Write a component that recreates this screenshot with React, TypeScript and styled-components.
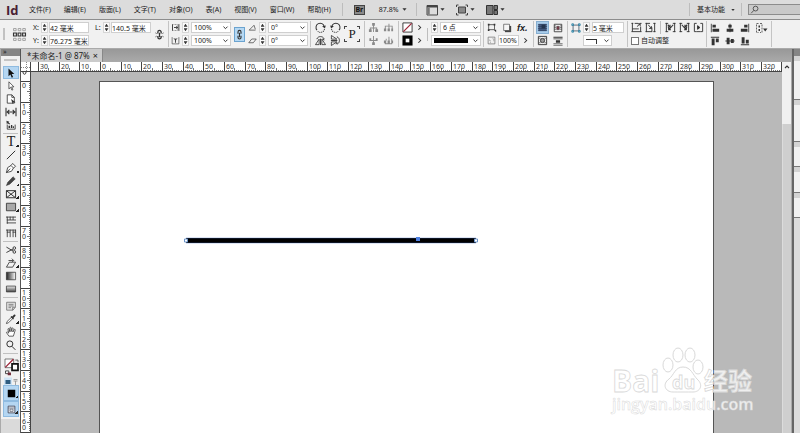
import React, { useLayoutEffect, useRef, useState } from "react";
import styled, { createGlobalStyle } from "styled-components";

const GlobalStyle = createGlobalStyle`
  * { box-sizing: border-box; }
  html, body, #root { height: 100%; }
  body {
    margin: 0;
    overflow: hidden;
    color: #222;
    font: 7px/10px "Noto Sans", "Noto Sans CJK SC", sans-serif;
  }
  button, input, select { font: inherit; color: inherit; margin: 0; }
`;

/* ---------- icons ---------- */

const k = "#333";
const g = "#8a8a8a";

const ICONS: Record<string, React.ReactNode> = {
  reference: (
    <g fill="none" stroke={k} strokeWidth=".8">
      <path stroke="#999" d="M.5 .5h2.400v2H.5zM4.800 .5h2.400v2H4.800zM9 .5h2.400v2H9zM.5 9.500h2.400v2H.5zM4.800 9.500h2.400v2H4.800zM9 9.500h2.400v2H9z" />
      <path strokeWidth="1.100" d="M.5 4.600h2.600v2.800H.5zM4.700 4.600h2.600v2.800H4.700zM8.900 4.600h2.600v2.800H8.900z" />
    </g>
  ),
  chain: (
    <g fill="none" stroke={k}>
      <path strokeWidth="1.400" d="M4.200 5V3.400a1.800 1.800 0 0 1 3.600 0V5M4.200 7.500v1.400a1.800 1.800 0 0 0 3.600 0V7.500M6 4v5" />
      <path strokeWidth=".8" d="M1.500 4.200l1.400.8M1.500 8.600l1.400-.8M10.500 4.200l-1.400.8M10.500 8.600l-1.400-.8" />
    </g>
  ),
  link: <path fill="none" stroke={k} strokeWidth="1.500" d="M4 5V2.500a2 2 0 0 1 4 0V5M4 7.500V10a2 2 0 0 0 4 0V7.500M6 3.500v6" />,
  scaleX: (
    <g fill="none" stroke={k} strokeWidth=".8">
      <path d="M1.500 2h7.500v8H1.500" strokeDasharray="1 1" />
      <path d="M2 2v8M10.500 1.500v9M4 6h5M7 4.300L9 6 7 7.700" strokeWidth="1.200" />
    </g>
  ),
  scaleY: (
    <g fill="none" stroke={k} strokeWidth=".8">
      <path d="M1.500 1.500v9h9v-9" />
      <path d="M6 9V3.500M4 3l2 2.500L8 3" strokeWidth="1.200" />
    </g>
  ),
  angle: <path fill="none" stroke={k} strokeWidth=".9" d="M10 9.500H1.500L8 3l1.800 5.400" />,
  shear: <path fill="none" stroke={k} strokeWidth=".9" d="M1 9L5 4h6L7 9z" />,
  rotateCw: (
    <g fill="none" stroke={k} strokeWidth="1.100">
      <path d="M2.200 8.800A4.500 4.500 0 1 1 10 5" />
      <path d="M3 10.200a4.500 4.500 0 0 0 7.400-2.500" strokeDasharray="1 1" />
      <path fill={k} stroke="none" d="M11.800 3.800L7.800 4.600l3 2.600z" />
    </g>
  ),
  rotateCcw: (
    <g fill="none" stroke={k} strokeWidth="1.100">
      <path d="M9.800 8.800A4.500 4.500 0 1 0 2 5" />
      <path d="M9 10.200a4.500 4.500 0 0 1-7.400-2.500" strokeDasharray="1 1" />
      <path fill={k} stroke="none" d="M.2 3.800l4 .8-3 2.600z" />
    </g>
  ),
  flipH: (
    <g fill="none" stroke={k}>
      <path d="M.5 10.500h4V4.500zM7.500 10.500h4l-4-6z" strokeWidth=".9" />
      <path d="M2 4.500C3 .8 9 .8 10 4.500M10.200 5.500l-2-1.200M6 4v7" strokeWidth="1" />
    </g>
  ),
  flipV: (
    <g fill="none" stroke={k}>
      <path d="M1.500 .5v4h6zM1.500 11.500v-4h6z" strokeWidth=".9" />
      <path d="M7.500 2C11.200 3 11.200 9 7.500 10M6.500 10l1.200-2M1 6h7" strokeWidth="1" />
    </g>
  ),
  parent: <path fill={g} d="M4.500 1h3v3h-1v2H10v2h1v3H8V8h1V7H6.500v4h-1V7H3v1h1v3H1V8h1V6h3.500V4h-1z" />,
  child: <path fill={g} d="M4.500 11h3V8h-1V6.500h4v-3h-2V5.500h-2V1h-1v4.500h-2v-2h-2v3h4V8h-1z" />,
  prevObj: <path fill={g} d="M1 7h2.500v3H1zM5 7h2.500v3H5zM9 7h2v3H9zM2 4h8v1H2zM2 4h1v3H2zM6 2h1v5H6zM9.500 4h1v3h-1z" />,
  nextObj: <path fill={g} d="M1 6h2.500v3H1zM5 6h2.500v3H5zM9 6h2v3H9zM2 9h8v1H2zM3 4h1v2H3zM6 2h1v4H6zM9 4h1v2H9z" />,
  noFill: (
    <g>
      <path fill="#fff" stroke={k} d="M1 1h10v10H1z" />
      <path stroke="#9d2437" strokeWidth="1.300" d="M1.500 10.500l9-9" />
    </g>
  ),
  strokeSwatch: (
    <g>
      <path fill="#000" d="M.5.5h11v11H.5z" />
      <path fill="#fff" d="M4 4h4v4H4z" />
    </g>
  ),
  arrow: <path fill="none" stroke={k} strokeWidth="1.400" d="M4.500 3l3 3-3 3" />,
  chevron: <path fill="none" stroke={k} strokeWidth="1.700" d="M2.500 4.500L6 8l3.500-3.500" />,
  chevronUp: <path fill="none" stroke={k} strokeWidth="1.700" d="M3 7.500l3-3 3 3" />,
  caret: <path fill={k} d="M1 3h10L6 9z" />,
  effect: (
    <g fill="none" stroke={k} strokeWidth=".9">
      <path d="M2 2h7v6H2z" />
      <path fill={k} stroke="none" d="M1 1h2v2H1zM8 1h2v2H8zM1 7.500h2v2H1zM8 8h3v3z" />
    </g>
  ),
  shadow: (
    <g>
      <path fill="#444" d="M3.500 3.500H11V11H3.500z" />
      <path fill="#f6f6f6" stroke={k} strokeWidth=".7" d="M2 1.500h7v7.500H2z" />
    </g>
  ),
  opacity: (
    <g fill="none" stroke="#666" strokeWidth=".9">
      <path d="M1.500 1.500h9v9h-9z" />
      <path d="M3 5.500h1.500v3H3M7.500 3.500h1.500v3H7.500" strokeDasharray="1 1" />
    </g>
  ),
  wrapNone: (
    <g>
      <path fill="#4a6288" d="M1.500 2h9v8h-9z" />
      <path stroke="#2a3b58" strokeWidth=".8" d="M1 3h10M1 5h10M1 7h10M1 9h10" />
      <path fill="#24364f" d="M5 3h4v4H5z" />
    </g>
  ),
  wrapBox: (
    <g fill="none" stroke={k}>
      <path strokeWidth="1" d="M1.500 1.500h9v9h-9z" />
      <path strokeWidth=".8" d="M1.500 3.500h2M1.500 5.500h2M1.500 7.500h2M8.500 3.500h2M8.500 5.500h2M8.500 7.500h2" />
      <path fill="#7d3b4a" strokeWidth=".6" d="M4.500 4h3v4h-3z" />
    </g>
  ),
  wrapShape: (
    <g fill="none" stroke={k}>
      <path d="M1.500 1.500h9v9h-9z" />
      <circle cx="6" cy="6" r="2.300" fill="#999" />
      <path strokeWidth=".7" d="M2 3.500h2M8 3.500h2M2 8.500h2M8 8.500h2" />
    </g>
  ),
  wrapJump: <path fill={k} d="M.5 .8h11v1.300H.5zM.5 3h11v1H.5zM3.500 5h5v3h-5zM.5 9h11v1H.5zM.5 10.700h11v.8H.5z" />,
  corner: (
    <g fill="none" stroke="#2f7fa0">
      <path d="M2.500 2.500h7v7h-7z" stroke="#456" />
      <path fill="#8cc9df" d="M1 1h2v2H1zM9 1h2v2H9zM1 9h2v2H1zM9 9h2v2H9z" />
    </g>
  ),
  fitA: (
    <g fill="none" stroke={k} strokeWidth="1">
      <path d="M.5 1.500h2M9.500 1.500h2M1.500 1v9.500M10.500 5v5.500M.5 10.500h11M1.500 7.500h7" />
      <path d="M4 1.500h4M6.500 5L10 2M7.500 2H10v2.500" />
    </g>
  ),
  fitB: (
    <g fill="none" stroke={k} strokeWidth="1">
      <path d="M.5 1.500h5M1.500 1v10M.5 10.500h7M7.500 6v5M10.500 1v10M9 1.500h2.500M9 10.500h2.500" />
      <path d="M3.500 3l3.500 4M7 4.500V7H4.500" />
    </g>
  ),
  fitC: (
    <g fill="none" stroke={k} strokeWidth="1">
      <path d="M1.500 1v10M10.500 1v10M.5 1.500h3M8.500 1.500h3M.5 10.500h3M8.500 10.500h3" />
      <path d="M3 3l2.500 2.500M5.500 3v2.500H3M9 3L4 8.500M4 6v2.500h2.500" strokeWidth="1.200" />
    </g>
  ),
  fitD: (
    <g fill="none" stroke={k} strokeWidth="1">
      <path d="M1.500 1v10M10.500 1v10M.5 1.500h3M8.500 1.500h3M.5 10.500h3M8.500 10.500h3" />
      <path d="M9 3L6.500 5.500M6.500 3v2.500H9M3 3l5 5.500M8 6v2.500H5.500" strokeWidth="1.200" />
    </g>
  ),
  fitE: (
    <g fill="none" stroke={k} strokeWidth="1">
      <path d="M4 1.500H1.500v9H4M8 1.500h2.500v9H8M4 10.500h4" />
      <path fill={k} d="M5 4l2.500 2L5 8z" />
    </g>
  ),
  alignL: <path fill={k} d="M1 1h1v10H1zM3 2h4v3.500H3zM3 7h8v3.500H3z" />,
  alignC: <path fill={k} d="M5.500 1h1v10h-1zM4 2h4v3.500H4zM2 7h8v3.500H2z" />,
  alignR: <path fill={k} d="M10 1h1v10h-1zM5 2h4v3.500H5zM1 7h8v3.500H1z" />,
  alignT: <path fill={k} d="M1 1h10v1H1zM2 3h3.500v8H2zM7 3h3.500v4.500H7z" />,
  alignM: <path fill={k} d="M.5 5.500h11v1H.5zM2 2h3.500v8H2zM7 3.500h3.500v5H7z" />,
  alignB: <path fill={k} d="M1 10h10v1H1zM2 1.500h3.500V9H2zM7 4.500h3.500V9H7z" />,
  alignTo: (
    <g fill="none" stroke="#555" strokeWidth=".9">
      <path d="M3.500 1.500h-2v9h2M5 1.500h2v9H5" strokeDasharray="2 1" />
      <path fill={k} stroke="none" d="M8 6.500h4.500L10.200 9.500zM3.500 3.500h1.500v2H3.500zM3.500 7h1.500v2H3.500z" />
    </g>
  ),
  search: <path fill="none" stroke={k} strokeWidth="1" d="M1.500 11l3.600-3.800M4.200 4.800a3.200 3.200 0 1 1 6.400 0 3.200 3.200 0 0 1-6.400 0z" />,
  viewOptions: (
    <g fill="none" stroke="#444">
      <path d="M1 1.500h10.500v9.500H1z" />
      <path strokeWidth="2" d="M1 2.500h10.500" />
      <path strokeWidth="2.500" stroke="#777" d="M2.500 3.500v7" />
    </g>
  ),
  screenMode: (
    <g fill="none" stroke="#444">
      <path fill="#888" d="M2.500 3h7v6h-7z" />
      <path d="M.5 3V1h2M9.500 1h2v2M.5 9v2h2M9.500 11h2V9" />
    </g>
  ),
  arrange: <path fill="#777" stroke="#333" d="M.5 1.500h6.500v9H.5zM8 1.500h3.500v4H8zM8 6.500h3.500v4H8z" />,
  select: <path fill="#111" d="M3 .5l7 6.700-3.200.1 1.700 3.600-1.600.7-1.600-3.700L3 10z" />,
  direct: <path fill="#fff" stroke={k} strokeWidth=".9" d="M3.500 1l6 6-2.800.1 1.600 3.300-1.200.6-1.600-3.500-2 2z" />,
  pageTool: (
    <g fill="#fff" stroke={k} strokeWidth="1">
      <path d="M1.500 11V1h5.500l3 3v7z" />
      <path d="M7 1v3h3" fill="none" />
      <path fill={k} stroke="none" d="M6 6l5.500 4-2.500.2-1 1.800z" />
    </g>
  ),
  gap: <path fill="none" stroke={k} strokeWidth="1.300" d="M0 1v10M12 1v10M1.500 6h9M4 3.500L1.500 6 4 8.500M8 3.500L10.500 6 8 8.500" />,
  collect: (
    <g fill="none" stroke={k}>
      <path d="M1.500 5.500v5.500h9.500V5.500" />
      <path fill={k} stroke="none" d="M3 7h2v2.500H3zM6 6h1.500v3.500H6zM8.200 7.500h1.300v2H8.200zM.5 1l3.500 1-1 1 2 1.500-1 1L2 4 1 5z" />
    </g>
  ),
  line: <path stroke={k} strokeWidth="1.200" d="M1 11L11 1" />,
  pen: (
    <g fill="#fff" stroke={k} strokeWidth="1">
      <path d="M.5 11.500L2 5.500 6 3l3 3-2.500 4zM6 3l2-2.500L11.500 4 9 6" />
      <path d="M.5 11.500l4.500-4.700" />
    </g>
  ),
  pencil: <path fill="#444" stroke={k} strokeWidth=".6" d="M.5 11.500l1.700-4L8.500 .9 11.100 3.500 4.500 9.800z" />,
  frame: <path fill="none" stroke={k} strokeWidth="1.200" d="M.5 2h11v8.500H.5zM.5 2l11 8.500M11.500 2L.5 10.500" />,
  rect: <path fill="#a9a9a9" stroke={k} strokeWidth="1" d="M.5 1.500h11v9H.5z" />,
  gridH: <path fill="none" stroke={k} strokeWidth="1" d="M0 2.500h12M1.500 2v8.500M5 2v4M8.500 2v4M1 6h11M1 9.500h11" />,
  gridV: <path fill="none" stroke={k} strokeWidth="1" d="M0 2.500h12M1.500 2v9M5 2v9M8.500 2v9M11.500 2v9M1 5h4M8 5h4" />,
  scissors: (
    <g fill="none" stroke={k} strokeWidth="1.100">
      <path d="M.5 2.500l8 4.700M.5 9l8-4.200" />
      <circle cx="10" cy="3.700" r="1.600" />
      <circle cx="10" cy="8.300" r="1.600" />
    </g>
  ),
  transform: (
    <g fill="none" stroke={k} strokeWidth="1">
      <path d="M.5 11L4 5h7.500L8 11z" />
      <path d="M3 3h6M7 .8L9.200 3 7 5.200" />
    </g>
  ),
  swatchH: <path fill="url(#gradH)" stroke={k} strokeWidth=".9" d="M.5 1.500h11v9H.5z" />,
  swatchV: <path fill="url(#gradV)" stroke={k} strokeWidth=".9" d="M.5 2.500h11v7H.5z" />,
  note: (
    <g fill="#e2e2e2" stroke="#666" strokeWidth=".9">
      <path d="M.8 1.500h10.500v6l-3 3.500H.8z" />
      <path d="M3 4h6M3 6h6M3 8h3M8 11V7.500h3" fill="none" />
    </g>
  ),
  dropper: (
    <g>
      <path fill="#fff" stroke={k} strokeWidth=".9" d="M.5 11.500l.8-2.500L6.500 4 8 5.500 3 10.500z" />
      <path fill={k} d="M5.500 3.500l1-1 1 .5L9.500.8c1.500-.7 2.500.7 1.700 1.700L9 4.700l.5 1-1 1z" />
    </g>
  ),
  hand: <path fill="#fff" stroke={k} strokeWidth=".9" d="M3.500 11L.6 6.700c0-1 1-1 1.500-.4L3.300 7.300 2.300 2.500c.3-1 1.300-.8 1.400 0l.9 3.200V1c.3-.9 1.400-.9 1.500 0v4.500L7.200 1.500c.4-.8 1.400-.5 1.400.3L8.200 6l1.700-3c.7-.6 1.500 0 1.200.8L9.600 8.500l-.8 2.500z" />,
  zoom: <path fill="none" stroke={k} strokeWidth="1.200" d="M7 7.500l4.300 4.300M1 4.700a3.600 3.600 0 1 1 7.200 0 3.600 3.600 0 0 1-7.200 0z" />,
  fillStroke: (
    <g>
      <path fill="#fff" stroke="#555" strokeWidth=".7" d="M0 0h8v8H0z" />
      <path stroke="#9d2437" strokeWidth="1.200" d="M.3 7.700L7.700 .3" />
      <path fill="#fff" stroke="#111" strokeWidth="1.600" d="M6.500 4.500h5.500v6H6.500z" />
      <path fill="none" stroke={k} strokeWidth=".7" d="M9.500 1h2.500v2" />
      <path fill="#fff" stroke="#333" strokeWidth=".8" d="M.5 11h3v2.500h-3z" />
      <path fill="#702b38" d="M2.500 12.500h3V15h-3z" />
    </g>
  ),
  format: (
    <g>
      <path fill="#cfe4f5" d="M-1 1.500h8v9h-8z" />
      <path fill="#2e5c80" d="M.5 4h5v4h-5z" />
      <path stroke="#999" strokeWidth=".9" fill="none" d="M8.500 3.500h4M8.500 5h4M10.500 5v4" />
    </g>
  ),
  applied: <path fill="#000" d="M1 1h10v10H1z" />,
  screen: (
    <g fill="#e7eef4" stroke="#334">
      <path d="M1.500 1.500h9v9h-9z" />
      <path d="M2 4h8M4 5.500h4v3H4z" strokeWidth=".7" />
    </g>
  ),
};

const Glyph = styled.svg<{ $s?: number }>`
  display: block;
  flex: none;
  width: ${(p) => p.$s ?? 11}px;
  height: ${(p) => p.$s ?? 11}px;
  overflow: visible;
`;

const Icon = ({ n, s }: { n: string; s?: number }) => (
  <Glyph viewBox="0 0 12 12" $s={s} aria-hidden="true">
    {ICONS[n]}
  </Glyph>
);

const IconButton = styled.button<{ $on?: boolean }>`
  display: flex;
  flex: none;
  align-items: center;
  justify-content: center;
  padding: 0;
  border: 0;
  background: ${(p) => (p.$on ? "#a9cdeb" : "none")};
  outline: ${(p) => (p.$on ? "1px solid #86aed0" : "none")};
`;

const Btn = ({ n, s, on, label }: { n: string; s?: number; on?: boolean; label?: string }) => (
  <IconButton type="button" aria-label={label ?? n} $on={on}>
    <Icon n={n} s={s} />
  </IconButton>
);

/* ---------- application frame ---------- */

const Frame = styled.div`
  display: flex;
  flex-direction: column;
  height: 100vh;
  background: #b9b9b9;
`;

const MenuBar = styled.header`
  display: flex;
  flex: none;
  align-items: center;
  height: 19px;
  padding-left: 6px;
  background: #dcdcdc;
  white-space: nowrap;
`;

const Logo = styled.strong`
  width: 20px;
  color: #4a1f33;
  font: bold 13px/18px "Open Sans", sans-serif;
`;

const Menu = styled.nav`
  display: flex;
  gap: 13px;
  padding-left: 3px;
`;

const MenuItem = styled.button`
  padding: 0;
  border: 0;
  background: none;
  white-space: nowrap;
`;

const Divider = styled.i<{ $m: number }>`
  flex: none;
  width: 1px;
  height: 13px;
  margin: 0 ${(p) => p.$m}px;
  background: #bdbdbd;
`;

const Bridge = styled.button`
  width: 11px;
  height: 10px;
  margin-right: 14px;
  padding: 0;
  border: 1px solid #444;
  background: #8a8a8a;
  color: #111;
  font-weight: bold;
  line-height: 8px;
`;

const DropButton = styled.button<{ $gap?: number }>`
  display: flex;
  align-items: center;
  gap: ${(p) => p.$gap ?? 2}px;
  padding: 0;
  border: 0;
  background: none;
`;

const ViewTools = styled.div`
  display: flex;
  gap: 11px;
`;

const Workspace = styled.div`
  display: flex;
  align-items: center;
  margin-left: auto;
`;

const SearchBox = styled.label`
  display: flex;
  align-items: center;
  width: 52px;
  height: 11px;
  padding-left: 1px;
  border: 1px solid #8c8c8c;
  border-right: 0;
  background: #c9c9c9;
`;

const SearchInput = styled.input`
  width: 100%;
  min-width: 0;
  padding: 0;
  border: 0;
  outline: 0;
  background: none;
`;

/* ---------- control bar ---------- */

const ControlBar = styled.section`
  display: flex;
  flex: none;
  align-items: center;
  height: 30px;
  border-top: 1px solid #8d8d8d;
  border-bottom: 1px solid #aaa;
  background: #f1f1f1;
  white-space: nowrap;
  overflow: hidden;
`;

const Grip = styled.i`
  flex: none;
  width: 2px;
  height: 12px;
  margin: 0 8px 0 3px;
  background: #c2c2c2;
`;

const Group = styled.div<{ $w: number; $pad?: number; $line?: boolean }>`
  display: flex;
  flex: none;
  align-items: center;
  width: ${(p) => p.$w}px;
  height: 26px;
  padding-left: ${(p) => p.$pad ?? 0}px;
  gap: 3px;
  border-right: ${(p) => (p.$line ? "1px solid #c4c4c4" : "0")};
`;

const Rows = styled.div`
  display: grid;
  grid-template-rows: 11px 11px;
  gap: 2px;
`;

const Row = styled.div<{ $gap?: number }>`
  display: flex;
  align-items: center;
  height: 11px;
  gap: ${(p) => p.$gap ?? 2}px;
`;

const Field = styled.label<{ $w: number }>`
  display: flex;
  align-items: center;
  justify-content: space-between;
  width: ${(p) => p.$w}px;
`;

const TextInput = styled.input<{ $w: number }>`
  width: ${(p) => p.$w}px;
  height: 11px;
  padding: 0;
  border: 1px solid #cfcfcf;
  outline: 0;
  background: #fff;
`;

const SelectWrap = styled.span<{ $w: number }>`
  display: grid;
  align-items: center;
  width: ${(p) => p.$w}px;
  height: 11px;
  border: 1px solid #cfcfcf;
  background: #fff;
  & > * { grid-area: 1 / 1; }
  & > svg { justify-self: end; margin-right: 1px; pointer-events: none; }
`;

const NativeSelect = styled.select`
  width: 100%;
  height: 9px;
  padding: 0 2px;
  border: 0;
  outline: 0;
  appearance: none;
  background: none;
  line-height: 9px;
`;

const StrokeSample = styled.i`
  width: 34px;
  height: 5px;
  margin-left: 2px;
  background: #000;
`;

const CornerSample = styled.i`
  width: 11px;
  height: 5px;
  margin: 2px 0 0 2px;
  border-top: 1px solid #333;
  border-right: 1px solid #333;
`;

const SpinBox = styled.span`
  display: grid;
  flex: none;
  width: 7px;
  height: 11px;
  border: 1px solid #d6d6d6;
  background: #fafafa;
`;

const SpinButton = styled.button<{ $down?: boolean }>`
  justify-self: center;
  align-self: center;
  width: 4px;
  height: 3px;
  padding: 0;
  border: 0;
  background: #333;
  clip-path: ${(p) => (p.$down ? "polygon(0 0, 100% 0, 50% 100%)" : "polygon(50% 0, 100% 100%, 0 100%)")};
`;

const LinkButton = styled.button`
  display: grid;
  place-items: center;
  width: 11px;
  height: 15px;
  padding: 0;
  border: 1px solid #6ba3cf;
  background: #b5d8f3;
`;

const ParagraphMark = styled.span`
  display: grid;
  place-items: center;
  width: 16px;
  height: 16px;
  background:
    linear-gradient(#444, #444) 0 0 / 3px 1px, linear-gradient(#444, #444) 0 0 / 1px 3px,
    linear-gradient(#444, #444) 100% 0 / 3px 1px, linear-gradient(#444, #444) 100% 0 / 1px 3px,
    linear-gradient(#444, #444) 0 100% / 3px 1px, linear-gradient(#444, #444) 0 100% / 1px 3px,
    linear-gradient(#444, #444) 100% 100% / 3px 1px, linear-gradient(#444, #444) 100% 100% / 1px 3px;
  background-repeat: no-repeat;
  font: 13px/16px "Liberation Serif", serif;
`;

const Fx = styled.button`
  padding: 0;
  border: 0;
  background: none;
  font: italic bold 9px/10px "Liberation Sans", sans-serif;
`;

const CheckLabel = styled.label`
  display: flex;
  align-items: center;
  gap: 2px;
`;

const CheckBox = styled.input`
  width: 8px;
  height: 8px;
  border: 1px solid #777;
  appearance: none;
  background: #fff;
`;

const Spin = ({ of }: { of: string }) => (
  <SpinBox>
    <SpinButton type="button" aria-label={`${of} +`} />
    <SpinButton type="button" aria-label={`${of} -`} $down />
  </SpinBox>
);

const NumberField = ({ label, value }: { label: string; value: string }) => (
  <Field $w={56}>
    {label}
    <Row $gap={1}>
      <Spin of={label} />
      <TextInput $w={40} defaultValue={value} />
    </Row>
  </Field>
);

const Select = ({ w, value, label, children }: { w: number; value: string; label: string; children?: React.ReactNode }) => (
  <SelectWrap $w={w}>
    {children}
    <NativeSelect aria-label={label}>
      <option>{value}</option>
    </NativeSelect>
    <Icon n="chevron" s={7} />
  </SelectWrap>
);

const SpinSelect = ({ icon, value, label }: { icon: string; value: string; label: string }) => (
  <Row $gap={2}>
    <Icon n={icon} s={9} />
    <Spin of={label} />
    <Select w={40} value={value} label={label} />
  </Row>
);

/* ---------- work area ---------- */

const Main = styled.main`
  display: flex;
  flex: 1;
  min-height: 0;
`;

const ToolBox = styled.aside`
  display: flex;
  flex: none;
  flex-direction: column;
  width: 20px;
  border-left: 1px solid #aaa;
  background: #dadada;
`;

const ToolHeader = styled.div`
  height: 7px;
  padding-left: 2px;
  background: #858585;
  color: #222;
  line-height: 6px;
`;

const ToolGrip = styled.div`
  width: 13px;
  height: 2px;
  margin: 3px auto 5px;
  background: #c4c4c4;
`;

const ToolList = styled.div`
  background: #f1f1f1;
`;

const ToolGroup = styled.div`
  display: grid;
  justify-items: center;
  margin: 0 2px;
  padding-bottom: 2px;
  border-bottom: 1px solid #c0c0c0;
  & + & { padding-top: 1px; }
  &:last-child { border-bottom: 0; }
`;

const ToolButton = styled.button<{ $on?: boolean; $h?: number; $more?: boolean }>`
  display: grid;
  place-items: center;
  width: 16px;
  height: ${(p) => p.$h ?? 13}px;
  padding: 0;
  border: ${(p) => (p.$on ? "1px solid #8fbbe0" : "0")};
  background:
    ${(p) => (p.$more ? "linear-gradient(135deg, transparent 50%, #222 50%) 100% 85% / 3px 3px no-repeat," : "")}
    ${(p) => (p.$on ? "#b4d6f2" : "transparent")};
  font: 14px/12px "Liberation Serif", serif;
`;

const Document = styled.div`
  display: flex;
  flex: 1;
  flex-direction: column;
  min-width: 0;
  border-left: 1px solid #555;
`;

const TabStrip = styled.div`
  display: flex;
  flex: none;
  height: 13px;
  background: linear-gradient(#989898, #aaa);
`;

const Tab = styled.div`
  display: flex;
  align-items: center;
  gap: 3px;
  padding: 0 4px 0 6px;
  border-right: 1px solid #888;
  background: #cbcbcb;
  font-size: 8px;
  white-space: nowrap;
`;

const CloseButton = styled.button`
  padding: 0;
  border: 0;
  background: none;
  font-size: 9px;
  line-height: 10px;
`;

const View = styled.div`
  display: grid;
  flex: 1;
  grid-template: 10px minmax(0, 1fr) / 10px minmax(0, 1fr) 10px;
  min-height: 0;
`;

const RulerSvg = styled.svg`
  display: block;
  width: 100%;
  height: 100%;
  background: #fff;
  fill: #333;
  font-family: "Liberation Sans Narrow", "Noto Sans", sans-serif;
  font-size: 7px;
`;

const Canvas = styled.div`
  position: relative;
  display: flex;
  padding: 9px 68px 0;
  background: #b9b9b9;
`;

const Page = styled.div`
  position: relative;
  flex: 1;
  border: 1px solid #555;
  border-bottom: 0;
  background: #fff;
`;

const LineObject = styled.svg`
  position: absolute;
  left: 83px;
  top: 152px;
  width: 297px;
  height: 12px;
`;

const Watermark = styled.svg`
  position: absolute;
  right: 26px;
  bottom: 14px;
  width: 146px;
  height: 72px;
`;

const ScrollBar = styled.div`
  display: grid;
  grid-row: 1 / 3;
  grid-column: 3;
  grid-template-rows: 10px 52px 1fr;
  border-right: 1px solid #aaa;
  background: #f0f0f0;
`;

const Thumb = styled.div`
  grid-row: 3;
  border-left: 1px solid #dcdcdc;
  background: #cfcfcf;
`;

const Dock = styled.aside`
  flex: none;
  width: 8px;
  border-left: 2px solid #666;
  background: #dcdcdc;
`;

const DockHeader = styled.div`
  height: 7px;
  background: #858585;
`;

const DockPanel = styled.div<{ $h: number }>`
  height: ${(p) => p.$h}px;
  border-top: 5px solid #d3d3d3;
  border-bottom: 1px solid #777;
  background: #f1f1f1;
`;

/* Screen pixels for a hundred millimetres at the current zoom. */
const SPAN = 2065;
const position = (origin: number, mm: number) => Math.round(origin + (mm * SPAN) / 10000);

/* Tracks an element's size so that the rulers draw only what is visible. */
const useExtent = () => {
  const ref = useRef<SVGSVGElement>(null);
  const [size, setSize] = useState({ width: 0, height: 0 });
  useLayoutEffect(() => {
    const el = ref.current;
    if (!el) return;
    const measure = () => {
      const r = el.getBoundingClientRect();
      setSize({ width: r.width, height: r.height });
    };
    measure();
    const observer = new ResizeObserver(measure);
    observer.observe(el);
    return () => observer.disconnect();
  }, []);
  return { ref, ...size };
};

const tens = (from: number, origin: number, length: number) => {
  const list: number[] = [];
  for (let mm = from; position(origin, mm * 10) < length; mm += 10) list.push(mm);
  return list;
};

const MINOR = [1, 2, 3, 4, 5, 6, 7, 8, 9];

const HorizontalRuler = () => {
  const { ref, width } = useExtent();
  return (
    <RulerSvg ref={ref}>
      {tens(-30, 69, width).map((mm) => {
        const x = position(69, mm * 10);
        return (
          <g key={mm}>
            <path d={`M${x + 0.5} 0v10`} stroke="#444" />
            {MINOR.map((j) => (
              <path key={j} d={`M${position(69, (mm + j) * 10) + 0.5} ${j === 5 ? 6 : 8}v4`} stroke="#777" />
            ))}
            {x + 14 < width && <text x={x + 2} y="7">{Math.abs(mm)}</text>}
          </g>
        );
      })}
      <path d={`M0 9.5h${width}`} stroke="#444" />
    </RulerSvg>
  );
};

const VerticalRuler = () => {
  const { ref, height } = useExtent();
  return (
    <RulerSvg ref={ref}>
      <path d="M2 0c0 3 3 3 3 0" fill="none" stroke="#333" />
      {tens(0, 9, height).map((mm) => {
        const y = position(9, mm * 10);
        const digits = String(mm).split("");
        return (
          <g key={mm}>
            <path d={`M0 ${y + 0.5}h10`} stroke="#444" />
            {MINOR.map((j) => (
              <path key={j} d={`M${j === 5 ? 6 : 8} ${position(9, (mm + j) * 10) + 0.5}h4`} stroke="#777" />
            ))}
            {y + digits.length * 6 < height && (
              <text y={y + 7}>
                {digits.map((d, j) => (
                  <tspan key={j} x="1" dy={j ? 6 : 0}>{d}</tspan>
                ))}
              </text>
            )}
          </g>
        );
      })}
      <path d={`M9.5 0v${height}`} stroke="#444" />
    </RulerSvg>
  );
};

const MENUS = ["文件(F)", "编辑(E)", "版面(L)", "文字(T)", "对象(O)", "表(A)", "视图(V)", "窗口(W)", "帮助(H)"];

type Tool = [icon: string, label: string, more?: boolean];
const TOOLS: Tool[][] = [
  [["select", "选择"], ["direct", "直接选择"], ["pageTool", "页面"], ["gap", "间隙"], ["collect", "内容收集器"]],
  [
    ["T", "文字", true], ["line", "直线"], ["pen", "钢笔", true], ["pencil", "铅笔", true],
    ["frame", "矩形框架", true], ["rect", "矩形", true], ["gridH", "水平网格"], ["gridV", "垂直网格"],
  ],
  [["scissors", "剪刀"], ["transform", "自由变换", true], ["swatchH", "渐变色板"], ["swatchV", "渐变羽化"]],
  [["note", "附注"], ["dropper", "吸管", true], ["hand", "抓手"], ["zoom", "缩放显示"]],
];

export default function App() {
  return (
    <Frame>
      <GlobalStyle />
      <MenuBar>
        <Logo>Id</Logo>
        <Menu>
          {MENUS.map((m) => (
            <MenuItem type="button" key={m}>{m}</MenuItem>
          ))}
        </Menu>
        <Divider $m={11} />
        <Bridge type="button">Br</Bridge>
        <DropButton type="button" $gap={3}>87.8%<Icon n="caret" s={5} /></DropButton>
        <Divider $m={9} />
        <ViewTools>
          {["viewOptions", "screenMode", "arrange"].map((n) => (
            <DropButton type="button" key={n} aria-label={n}>
              <Icon n={n} s={12} />
              <Icon n="caret" s={5} />
            </DropButton>
          ))}
        </ViewTools>
        <Workspace>
          <Divider $m={7} />
          <DropButton type="button" $gap={6}>基本功能<Icon n="caret" s={4} /></DropButton>
          <Divider $m={6} />
          <SearchBox>
            <Icon n="search" s={9} />
            <SearchInput aria-label="搜索" />
          </SearchBox>
        </Workspace>
      </MenuBar>

      <ControlBar>
        <Grip />
        <Group $w={20}><Icon n="reference" s={13} /></Group>
        <Group $w={62}>
          <Rows>
            <NumberField label="X:" value="42 毫米" />
            <NumberField label="Y:" value="76.275 毫米" />
          </Rows>
        </Group>
        <Group $w={74} $line>
          <Rows>
            <NumberField label="L:" value="140.5 毫米" />
            <span />
          </Rows>
          <Btn n="chain" label="约束" />
        </Group>
        <Group $w={142} $pad={2} $line>
          <Rows>
            <SpinSelect icon="scaleX" value="100%" label="X 缩放" />
            <SpinSelect icon="scaleY" value="100%" label="Y 缩放" />
          </Rows>
          <LinkButton type="button" aria-label="约束缩放比例"><Icon n="link" s={9} /></LinkButton>
          <Rows>
            <SpinSelect icon="angle" value="0°" label="旋转" />
            <SpinSelect icon="shear" value="0°" label="切变" />
          </Rows>
        </Group>
        <Group $w={54} $pad={4} $line>
          <Rows>
            <Row $gap={4}><Btn n="rotateCw" /><Btn n="rotateCcw" /></Row>
            <Row $gap={4}><Btn n="flipH" /><Btn n="flipV" /></Row>
          </Rows>
          <ParagraphMark>P</ParagraphMark>
        </Group>
        <Group $w={34} $pad={3} $line>
          <Rows>
            <Row $gap={4}><Btn n="parent" /><Btn n="prevObj" /></Row>
            <Row $gap={4}><Btn n="child" /><Btn n="nextObj" /></Row>
          </Rows>
        </Group>
        <Group $w={85} $pad={3} $line>
          <Rows>
            <Row><Btn n="noFill" /><Btn n="arrow" s={9} /></Row>
            <Row><Btn n="strokeSwatch" /><Btn n="arrow" s={9} /></Row>
          </Rows>
          <Divider $m={0} />
          <Rows>
            <Row $gap={2}><Spin of="粗细" /><Select w={41} value="6 点" label="粗细" /></Row>
            <Select w={50} value="" label="描边类型"><StrokeSample /></Select>
          </Rows>
        </Group>
        <Group $w={50} $pad={3} $line>
          <Rows>
            <Row $gap={5}><Btn n="effect" s={10} /><Btn n="shadow" s={10} /><Fx type="button">fx.</Fx></Row>
            <Row $gap={2}>
              <Icon n="opacity" s={9} />
              <TextInput $w={21} defaultValue="100%" aria-label="不透明度" />
              <Btn n="arrow" s={9} />
            </Row>
          </Rows>
        </Group>
        <Group $w={34} $pad={3} $line>
          <Rows>
            <Row $gap={5}><Btn n="wrapNone" on /><Btn n="wrapBox" s={10} /></Row>
            <Row $gap={5}><Btn n="wrapShape" /><Btn n="wrapJump" s={10} /></Row>
          </Rows>
        </Group>
        <Group $w={60} $pad={3} $line>
          <Rows>
            <Row><Icon n="corner" s={10} /><Spin of="转角" /><TextInput $w={32} defaultValue="5 毫米" aria-label="转角大小" /></Row>
            <Row><Glyph $s={10} /><Select w={29} value="" label="转角形状"><CornerSample /></Select></Row>
          </Rows>
        </Group>
        <Group $w={79} $pad={3} $line>
          <Rows>
            <Row $gap={3}>
              <Btn n="fitA" /><Btn n="fitB" /><Divider $m={1} /><Btn n="fitC" /><Btn n="fitD" /><Btn n="fitE" />
            </Row>
            <CheckLabel><CheckBox type="checkbox" />自动调整</CheckLabel>
          </Rows>
        </Group>
        <Group $w={65} $pad={3} $line>
          <Rows>
            <Row $gap={5}><Btn n="alignL" s={10} /><Btn n="alignC" s={10} /><Btn n="alignR" s={10} /><Btn n="alignTo" s={12} /></Row>
            <Row $gap={5}><Btn n="alignT" s={10} /><Btn n="alignM" s={10} /><Btn n="alignB" s={10} /></Row>
          </Rows>
        </Group>
      </ControlBar>

      <Main>
        <ToolBox>
          <ToolHeader>»</ToolHeader>
          <ToolList>
            <ToolGrip />
            {TOOLS.map((group, i) => (
              <ToolGroup key={i}>
                {group.map(([n, label, more]) => (
                  <ToolButton type="button" key={n} aria-label={label} $on={n === "select"} $more={more}>
                    {n === "T" ? "T" : <Icon n={n} s={10} />}
                  </ToolButton>
                ))}
              </ToolGroup>
            ))}
            <ToolGroup>
              <ToolButton type="button" aria-label="填色和描边" $h={21}><Icon n="fillStroke" s={13} /></ToolButton>
              <ToolButton type="button" aria-label="格式" $h={9}><Icon n="format" s={12} /></ToolButton>
              <ToolButton type="button" aria-label="应用颜色" $h={16} $on $more><Icon n="applied" s={9} /></ToolButton>
              <ToolButton type="button" aria-label="屏幕模式" $h={16} $on $more><Icon n="screen" s={9} /></ToolButton>
            </ToolGroup>
          </ToolList>
        </ToolBox>

        <Document>
          <TabStrip>
            <Tab>*未命名-1 @ 87%<CloseButton type="button" aria-label="关闭">×</CloseButton></Tab>
          </TabStrip>
          <View>
            <RulerSvg>
              <path d="M5.500 0v10M0 5.500h10" stroke="#888" strokeDasharray="1 1" />
              <path d="M0 9.500h10M9.500 0v10" stroke="#444" />
            </RulerSvg>
            <HorizontalRuler />
            <VerticalRuler />
            <Canvas>
              <Page>
                <LineObject viewBox="0 0 297 12">
                  <path d="M3 6.500h290" stroke="#000" strokeWidth="5" />
                  <path d="M3 4h290M3 9h290" stroke="#4a6fc0" strokeWidth=".4" />
                  <path d="M1.500 5h3v3h-3zM291.500 5h3v3h-3z" fill="#fff" stroke="#6a93c8" />
                  <path d="M233 3h4v4h-4z" fill="#4d7fe0" />
                </LineObject>
              </Page>
              <Watermark viewBox="0 0 146 72">
                <g fill="#fff" fillOpacity=".75" stroke="#d9d9d9" strokeWidth="1">
                  <ellipse cx="58" cy="18" rx="5" ry="7" />
                  <ellipse cx="68" cy="8" rx="5" ry="7" />
                  <ellipse cx="80" cy="8" rx="5" ry="7" />
                  <ellipse cx="88" cy="20" rx="5" ry="7" />
                  <path d="M73 20c8 0 10 8 14 12 7 6 3 13-4 13-4 0-16 0-20 0-8 0-11-8-4-13 5-4 6-12 14-12z" />
                </g>
                <g fill="#fff" fillOpacity=".8" stroke="#d9d9d9" strokeWidth=".8" fontFamily="Open Sans, Noto Sans CJK SC, sans-serif" fontWeight="bold">
                  <text x="2" y="45" fontSize="30">Bai</text>
                  <text x="62" y="42" fontSize="18">du</text>
                  <text x="94" y="43" fontSize="24">经验</text>
                  <text x="2" y="63" fontSize="16" fontWeight="600" strokeWidth=".5">jingyan.baidu.com</text>
                </g>
              </Watermark>
            </Canvas>
            <ScrollBar>
              <Btn n="chevronUp" s={8} label="向上滚动" />
              <Thumb />
            </ScrollBar>
          </View>
        </Document>

        <Dock>
          <DockHeader />
          {[44, 42, 25, 26, 25].map((h, i) => (
            <DockPanel key={i} $h={h} />
          ))}
        </Dock>
      </Main>
      <svg width="0" height="0" aria-hidden="true">
        <defs>
          <linearGradient id="gradH"><stop stopColor="#222" /><stop offset="1" stopColor="#fff" /></linearGradient>
          <linearGradient id="gradV" x2="0" y2="1"><stop stopColor="#eee" /><stop offset="1" stopColor="#444" /></linearGradient>
        </defs>
      </svg>
    </Frame>
  );
}
